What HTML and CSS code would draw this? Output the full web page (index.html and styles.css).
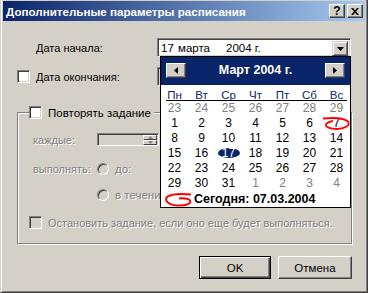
FILE: index.html
```html
<!DOCTYPE html>
<html lang="ru">
<head>
<meta charset="utf-8">
<link rel="stylesheet" href="styles.css">
</head>
<body>
<div class="window">
  <div class="titlebar">
    <span class="title">Дополнительные параметры расписания</span>
    <div class="tb-buttons">
      <span class="tb-btn help">?</span>
      <span class="tb-btn close"><svg width="8" height="7" viewBox="0 0 8 7"><path d="M0 0h2l2 2.2L6 0h2L5 3.5 8 7H6L4 4.8 2 7H0l3-3.5z" fill="#000"/></svg></span>
    </div>
  </div>
  <div class="content">
    <div class="row row-start">
      <span class="label">Дата начала:</span>
      <div class="combo">
        <span class="combo-text"><span class="cd">17</span><span class="cm">марта</span><span class="cy">2004 г.</span></span>
        <span class="combo-btn"><svg width="7" height="4" viewBox="0 0 7 4"><path d="M0 0h7L3.5 4z" fill="#000"/></svg></span>
      </div>
    </div>
    <div class="row row-end">
      <span class="check"></span>
      <span class="label label-end">Дата окончания:</span>
      <div class="combo combo-off">
        <span class="combo-text"></span>
        <span class="combo-btn"></span>
      </div>
    </div>
    <div class="group">
      <div class="legend"><span class="check"></span><span class="legend-text">Повторять задание</span></div>
      <div class="grow g-each">
        <span class="glabel dis">каждые:</span>
        <div class="spin">
          <span class="spin-field"></span>
          <span class="spin-btns"><span class="sb"><svg width="5" height="3" viewBox="0 0 5 3"><path d="M2.5 0L5 3H0z" fill="#808080"/></svg></span><span class="sb"><svg width="5" height="3" viewBox="0 0 5 3"><path d="M0 0h5L2.5 3z" fill="#808080"/></svg></span></span>
        </div>
      </div>
      <div class="grow g-exec">
        <span class="glabel dis">выполнять:</span>
        <span class="radio"></span>
        <span class="dis rlabel">до:</span>
      </div>
      <div class="grow g-dur">
        <span class="radio"></span>
        <span class="dis rlabel">в течение</span>
      </div>
      <div class="grow g-stop">
        <span class="check check-off"></span>
        <span class="dis stop-label">Остановить задание, если оно еще будет выполняться.</span>
      </div>
    </div>
    <div class="buttons">
      <span class="btn btn-default">OK</span>
      <span class="btn">Отмена</span>
    </div>
  </div>

  <div class="calendar">
    <div class="cal-head">
      <span class="cal-nav"><svg width="4" height="7" viewBox="0 0 4 7"><path d="M4 0v7L0 3.5z" fill="#000"/></svg></span>
      <span class="cal-title">Март 2004 г.</span>
      <span class="cal-nav"><svg width="4" height="7" viewBox="0 0 4 7"><path d="M0 0v7L4 3.5z" fill="#000"/></svg></span>
    </div>
    <div class="cal-names">
      <span>Пн</span><span>Вт</span><span>Ср</span><span>Чт</span><span>Пт</span><span>Сб</span><span>Вс</span>
    </div>
    <div class="cal-line"></div>
    <div class="cal-days">
      <span class="o">23</span><span class="o">24</span><span class="o">25</span><span class="o">26</span><span class="o">27</span><span class="o">28</span><span class="o">29</span>
      <span>1</span><span>2</span><span>3</span><span>4</span><span>5</span><span>6</span><span class="today">7<svg class="today-loop" width="29" height="15" viewBox="0 0 29 15"><path d="M1 2.5C10 1.5 22 1.8 26 5.5C29 9.5 22 13 15 13C8 13 3 11 4 8.5C5 6.5 8 5.5 11 5" fill="none" stroke="#f00" stroke-width="1.8"/></svg></span>
      <span>8</span><span>9</span><span>10</span><span>11</span><span>12</span><span>13</span><span>14</span>
      <span>15</span><span>16</span><span><span class="sel">17</span></span><span>18</span><span>19</span><span>20</span><span>21</span>
      <span>22</span><span>23</span><span>24</span><span>25</span><span>26</span><span>27</span><span>28</span>
      <span>29</span><span>30</span><span>31</span><span class="o">1</span><span class="o">2</span><span class="o">3</span><span class="o">4</span>
    </div>
    <div class="cal-today">
      <svg width="28" height="15" viewBox="0 0 28 15"><path d="M27 2.5C18 1.5 8 2 3.5 4.5C0 7.5 3 13 13 13.5C21 14 27.5 12 26 8.5C24.5 6.5 20 6 15 6.5" fill="none" stroke="#f00" stroke-width="2"/></svg>
      <span class="today-text">Сегодня: 07.03.2004</span>
    </div>
  </div>
</div>
</body>
</html>
```

FILE: styles.css
```css
* { box-sizing: border-box; }
html, body { margin: 0; padding: 0; }
body {
  width: 368px;
  height: 293px;
  overflow: hidden;
  background: #d4d0c8;
  font-family: "Liberation Sans", Arial, sans-serif;
  font-size: 11px;
  color: #000;
}
.window {
  position: relative;
  width: 368px;
  height: 293px;
  background: #d4d0c8;
  border: 1px solid;
  border-top: 0;
  border-color: #d4d0c8 #404040 #404040 #d4d0c8;
  box-shadow: inset 1px 0 #fff, inset -1px -1px #808080;
  padding: 1px 2px 2px 2px;
}
.titlebar {
  height: 20px;
  display: flex;
  align-items: center;
  justify-content: space-between;
  background: linear-gradient(to right, #0a246a, #a6caf0);
  padding-left: 3px;
}
.title {
  color: #fff;
  font-weight: bold;
  font-size: 11.6px;
  white-space: nowrap;
}
.tb-buttons {
  display: flex;
  gap: 2px;
  margin-right: 2px;
}
.tb-btn {
  width: 16px;
  height: 14px;
  display: flex;
  align-items: center;
  justify-content: center;
  background: #d4d0c8;
  border: 1px solid;
  border-color: #fff #404040 #404040 #fff;
  box-shadow: inset -1px -1px #808080;
  font-weight: bold;
  font-size: 12px;
  line-height: 12px;
}
.content {
  padding: 0 13px 0 14px;
}
.row {
  display: flex;
  align-items: center;
  height: 19px;
}
.row-start { margin-top: 17px; }
.row-end { margin-top: 10px; }
.label {
  flex: 0 0 140px;
  padding-left: 19px;
  white-space: nowrap;
}
.label-end {
  flex: 0 0 121px;
  padding-left: 0;
}
.check {
  flex: 0 0 13px;
  width: 13px;
  height: 13px;
  background: #fff;
  border: 1px solid;
  border-color: #808080 #fff #fff #808080;
  box-shadow: inset 1px 1px #404040, inset -1px -1px #d4d0c8;
}
.check-off { background: #d4d0c8; }
.row-end .check { margin-right: 6px; }
.combo {
  width: 194px;
  height: 19px;
  display: flex;
  background: #fff;
  border: 1px solid;
  border-color: #808080 #fff #fff #808080;
  box-shadow: inset 1px 1px #404040, inset -1px -1px #d4d0c8;
  padding: 2px 2px 2px 2px;
}
.combo-off { background: #d4d0c8; }
.combo-text {
  flex: 1;
  display: flex;
  align-items: center;
  padding-left: 1px;
  font-size: 11.5px;
  white-space: nowrap;
}
.cd { width: 17px; }
.cm { width: 48px; }
.combo-btn {
  width: 16px;
  height: 15px;
  display: flex;
  align-items: center;
  justify-content: center;
  background: #d4d0c8;
  border: 1px solid;
  border-color: #d4d0c8 #404040 #404040 #d4d0c8;
  box-shadow: inset 1px 1px #fff, inset -1px -1px #808080;
}
.group {
  margin-top: 26px;
  border: 1px solid #808080;
  box-shadow: inset 1px 1px #fff, 1px 1px #fff;
  padding: 0 0 14px 11px;
}
.legend {
  margin-top: -7px;
  height: 13px;
  display: flex;
  align-items: center;
  gap: 6px;
  width: fit-content;
  background: #d4d0c8;
  padding-right: 3px;
}
.legend-text { font-size: 11.5px; }
.grow {
  display: flex;
  align-items: center;
  height: 13px;
  padding-left: 4px;
}
.g-each { margin-top: 14px; }
.g-exec { margin-top: 16px; }
.g-dur { margin-top: 13px; padding-left: 68px; }
.g-stop { margin-top: 15px; padding-left: 0; }
.dis {
  color: #808080;
  text-shadow: 1px 1px 0 #fff;
  white-space: nowrap;
}
.glabel { flex: 0 0 64px; }
.spin {
  width: 62px;
  height: 13px;
  display: flex;
  background: #d4d0c8;
  border: 1px solid;
  border-color: #808080 #fff #fff #808080;
  box-shadow: inset 1px 1px #404040, inset -1px -1px #d4d0c8;
  padding: 1px 1px 1px 2px;
}
.spin-field { flex: 1; }
.spin-btns {
  width: 14px;
  display: flex;
  flex-direction: column;
}
.sb {
  flex: 1;
  display: flex;
  align-items: center;
  justify-content: center;
  background: #d4d0c8;
  border: 1px solid;
  border-color: #fff #404040 #404040 #fff;
}
.sb svg { display: block; }
.radio {
  flex: 0 0 12px;
  width: 12px;
  height: 12px;
  border-radius: 50%;
  border: 1px solid;
  border-color: #808080 #fff #fff #808080;
  box-shadow: inset 1px 1px #404040;
  background: #d4d0c8;
  margin-right: 6px;
}
.rlabel { font-size: 11.5px; }
.g-stop .check { margin-right: 6px; }
.stop-label { font-size: 11px; }
.buttons {
  margin-top: 12px;
  display: flex;
  justify-content: flex-end;
  gap: 7px;
}
.btn {
  height: 23px;
  width: 74px;
  display: flex;
  align-items: center;
  justify-content: center;
  background: #d4d0c8;
  border: 1px solid;
  border-color: #fff #404040 #404040 #fff;
  box-shadow: inset -1px -1px #808080;
  font-size: 11.5px;
}
.btn-default {
  width: 72px;
  border: 1px solid #000;
  box-shadow: inset 1px 1px #fff, inset -1px -1px #404040, inset -2px -2px #808080;
}

/* calendar popup */
.calendar {
  position: absolute;
  left: 159px;
  top: 56px;
  width: 191px;
  height: 152px;
  border: 1px solid #000;
  background: #fff;
}
.cal-head {
  height: 28px;
  background: #0a246a;
  display: flex;
  justify-content: space-between;
  align-items: flex-start;
  padding: 6px 5px 0 5px;
}
.cal-nav {
  width: 20px;
  height: 15px;
  display: flex;
  align-items: center;
  justify-content: center;
  background: #d4d0c8;
  border: 1px solid;
  border-color: #fff #404040 #404040 #fff;
  box-shadow: inset -1px -1px #808080;
}
.cal-title {
  color: #fff;
  font-weight: bold;
  font-size: 12.5px;
  line-height: 15px;
}
.cal-names {
  display: grid;
  grid-template-columns: repeat(7, 27px);
  height: 15px;
  line-height: 20px;
  text-align: center;
  color: #0a246a;
  font-size: 11.5px;
}
.cal-line {
  height: 1px;
  margin: 0 3px 0 5px;
  background: #000;
}
.cal-days {
  display: grid;
  grid-template-columns: repeat(7, 27px);
  grid-auto-rows: 15px;
  line-height: 15px;
  text-align: center;
  font-size: 12px;
}
.cal-days .o { color: #808080; }
.today { position: relative; }
.today-loop {
  position: absolute;
  left: -1px;
  top: 0;
}
.sel {
  display: inline-block;
  width: 22px;
  height: 10px;
  line-height: 10px;
  border-radius: 50%;
  background: #0a246a;
  color: #fff;
}
.cal-today {
  height: 16px;
  display: flex;
  align-items: center;
  padding-left: 3px;
  gap: 2px;
}
.cal-today svg { flex: 0 0 auto; }
.today-text {
  font-weight: bold;
  font-size: 12.5px;
  line-height: 18px;
}
```
